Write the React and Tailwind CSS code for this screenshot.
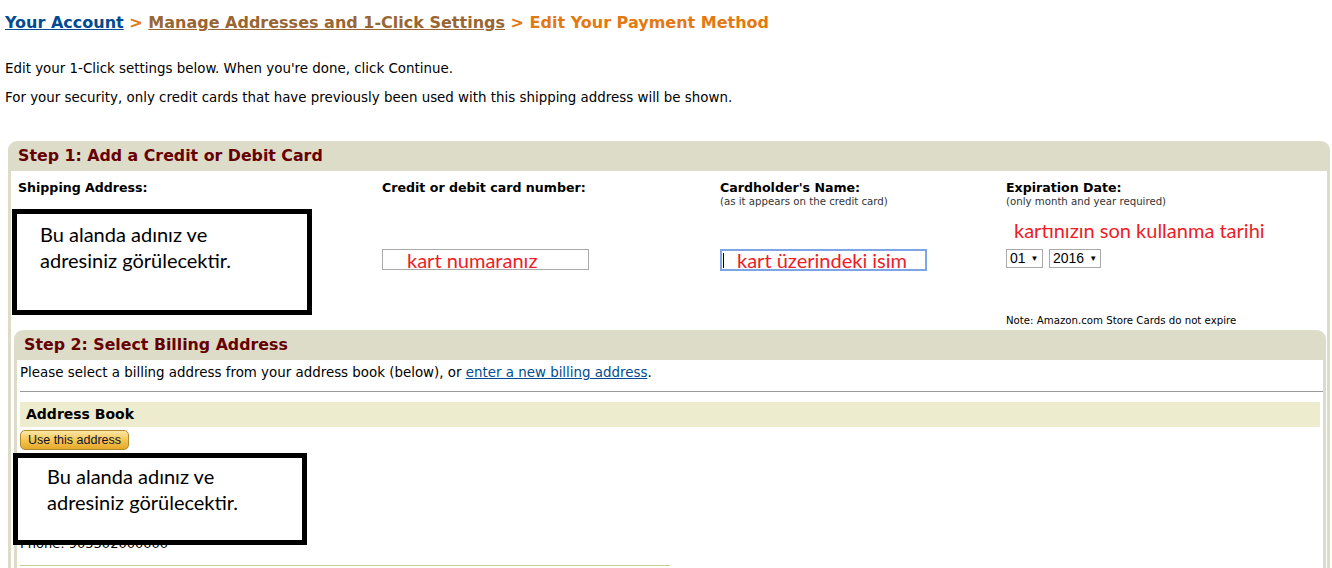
import React from "react";

const verdana = { fontFamily: '"DejaVu Sans", Verdana, sans-serif' };
const calibri = { fontFamily: 'Lato, "Open Sans", sans-serif' };

function AnnotationBox({ className = "" }) {
  return (
    <div className={`border-[5px] border-black bg-white text-black text-[20px] leading-[26px] ${className}`} style={calibri}>
      <div>Bu alanda adınız ve</div>
      <div>adresiniz görülecektir.</div>
    </div>
  );
}

function SelectBox({ value, width }) {
  return (
    <div
      className={`flex items-center h-[19px] border border-[#a9a9a9] bg-white pl-[3px] text-[14px] text-black ${width}`}
      style={{ fontFamily: '"Liberation Sans", Arial, sans-serif' }}
    >
      <span>{value}</span>
      <span className="ml-[5px] text-[8px]">▼</span>
    </div>
  );
}

export default function App() {
  return (
    <div className="w-[1332px] h-[568px] overflow-hidden bg-white text-black" style={verdana}>
      {/* breadcrumb */}
      <div className="pl-[5px] pt-[12px] text-[16px] font-bold leading-[22px] whitespace-nowrap">
        <a className="text-[#004b91] underline">Your Account</a>
        <span className="text-[#e47911]"> &gt; </span>
        <a className="text-[#996633] underline">Manage Addresses and 1-Click Settings</a>
        <span className="text-[#e47911]"> &gt; Edit Your Payment Method</span>
      </div>

      <p className="pl-[5px] mt-[27px] text-[13.4px] leading-[16px]">
        Edit your 1-Click settings below. When you're done, click Continue.
      </p>
      <p className="pl-[5px] mt-[13px] text-[13.4px] leading-[16px]">
        For your security, only credit cards that have previously been used with this shipping address will be shown.
      </p>

      {/* step 1 panel */}
      <div className="ml-[8px] mr-[2px] mt-[35px] rounded-t-[9px] border-x-[3px] border-[#dcdcc9] bg-white">
        <div className="h-[30px] bg-[#dcdcc9] rounded-t-[7px] pl-[7px] flex items-center">
          <h2 className="text-[15.8px] font-bold text-[#660000] leading-none">Step 1: Add a Credit or Debit Card</h2>
        </div>

        <div className="flex h-[159px] pl-[7px] pt-[10px]">
          {/* shipping address */}
          <div className="w-[364px]">
            <div className="text-[12.6px] font-bold leading-[14px]">Shipping Address:</div>
            <AnnotationBox className="mt-[14px] ml-[-6px] w-[300px] h-[106px] pl-[23px] pt-[7px]" />
          </div>

          {/* card number */}
          <div className="w-[338px]">
            <div className="text-[12.6px] font-bold leading-[14px]">Credit or debit card number:</div>
            <div
              className="mt-[54px] w-[207px] h-[21px] border border-[#a9a9a9] pl-[24px] flex items-center text-[20px] text-[#ee1c25]"
              style={calibri}
            >
              kart numaranız
            </div>
          </div>

          {/* cardholder */}
          <div className="w-[286px]">
            <div className="text-[12.6px] font-bold leading-[14px]">Cardholder's Name:</div>
            <div className="mt-[1px] text-[10.2px] leading-[12px] text-[#333]">(as it appears on the credit card)</div>
            <div
              className="mt-[41px] w-[207px] h-[22px] border-2 border-[#7ea6e6] pl-[1px] flex items-center text-[20px] text-[#ee1c25]"
              style={calibri}
            >
              <span className="w-px h-[15px] bg-black" />
              <span className="ml-[13px]">kart üzerindeki isim</span>
            </div>
          </div>

          {/* expiration */}
          <div className="flex-1">
            <div className="text-[12.6px] font-bold leading-[14px]">Expiration Date:</div>
            <div className="mt-[1px] text-[10.2px] leading-[12px] text-[#333]">(only month and year required)</div>
            <div className="mt-[10px] pl-[8px] text-[20px] leading-[24px] text-[#ee1c25]" style={calibri}>
              kartınızın son kullanma tarihi
            </div>
            <div className="mt-[7px] flex gap-[6px]">
              <SelectBox value="01" width="w-[37px]" />
              <SelectBox value="2016" width="w-[52px]" />
            </div>
            <div className="mt-[47px] text-[10.2px] leading-[12px]">Note: Amazon.com Store Cards do not expire</div>
          </div>
        </div>

        {/* step 2 panel */}
        <div className="relative ml-[3px] mr-[1px] rounded-t-[9px] border-x-[3px] border-[#dcdcc9] bg-white h-[240px]">
          <div className="h-[30px] bg-[#dcdcc9] rounded-t-[7px] pl-[7px] flex items-center">
            <h2 className="text-[15.8px] font-bold text-[#660000] leading-none">Step 2: Select Billing Address</h2>
          </div>
          <div className="pl-[3px]">
            <p className="pt-[5px] text-[13.4px] leading-[16px]">
              Please select a billing address from your address book (below), or{" "}
              <a className="text-[#004b91] underline">enter a new billing address</a>.
            </p>
            <div className="mt-[10px] h-px bg-[#999999]" />
            <div className="mt-[10px] mr-[3px] h-[25px] bg-[#eeeccf] pl-[6px] flex items-center">
              <span className="text-[14px] font-bold">Address Book</span>
            </div>
            <button
              className="mt-[2px] w-[109px] h-[20px] rounded-[5px] border border-[#b08a2e] bg-gradient-to-b from-[#fbe7a6] via-[#f4c74f] to-[#e5a82a] text-[12.5px] text-[#111133] leading-none"
              style={{ fontFamily: '"Liberation Sans", Arial, sans-serif' }}
            >
              Use this address
            </button>
            <div className="h-[86px]" />
            <div className="text-[13px] leading-[14px]">Phone: 905302000000</div>
            <div className="mt-[14px] w-[650px] h-px bg-[#cccc99]" />
          </div>

          {/* overlay note on the address book entry */}
          <AnnotationBox className="absolute left-[-4px] top-[123px] w-[294px] h-[92px] pl-[29px] pt-[5px]" />
        </div>
      </div>
    </div>
  );
}
